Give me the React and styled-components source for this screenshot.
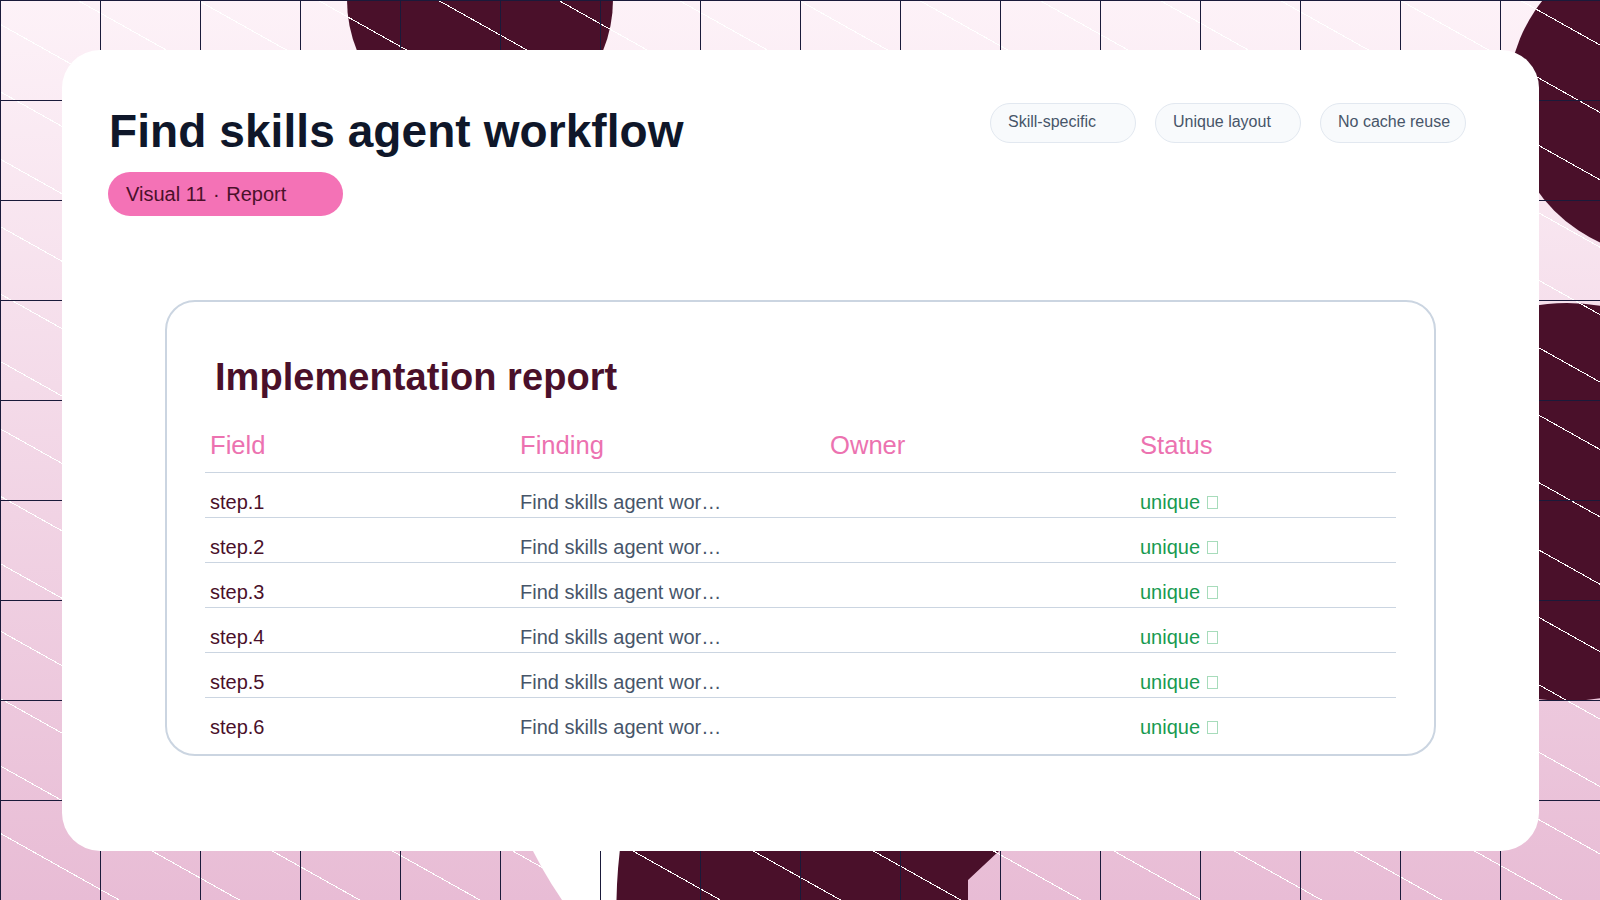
import React from 'react';
import styled, { createGlobalStyle } from 'styled-components';

const GlobalStyle = createGlobalStyle`
  html, body {
    margin: 0;
    padding: 0;
    background: #fdf2f8;
  }
  * {
    box-sizing: border-box;
  }
`;

const rows = ['step.1', 'step.2', 'step.3', 'step.4', 'step.5', 'step.6'];
const tags = ['Skill-specific', 'Unique layout', 'No cache reuse'];
const columns = ['Field', 'Finding', 'Owner', 'Status'];

const Backdrop = () => (
  <Blobs viewBox="0 0 1600 900" aria-hidden="true">
    <circle cx="480" cy="0" r="133" fill="#4a102a" />
    <circle cx="1666" cy="99" r="158" fill="#4a102a" />
    <circle cx="1567" cy="502" r="199" fill="#4a102a" />
    <path d="M525 834 Q540 868 562 900 L640 900 L640 834 Z" fill="#ffffff" />
    <path d="M622 834 Q617 868 616.5 900 L968 900 L968 880 L999 851 L1010 834 Z" fill="#4a102a" />
  </Blobs>
);

const App = () => (
  <Stage>
    <GlobalStyle />
    <Backdrop />
    <Lines />
    <Card>
      <Header>
        <TitleBlock>
          <Title>Find skills agent workflow</Title>
          <Badge>Visual 11 <Dot>·</Dot> Report</Badge>
        </TitleBlock>
        <Tags>
          {tags.map((tag) => (
            <Tag key={tag}>{tag}</Tag>
          ))}
        </Tags>
      </Header>
      <Panel>
        <PanelTitle>Implementation report</PanelTitle>
        <HeadRow>
          {columns.map((column) => (
            <HeadCell key={column}>{column}</HeadCell>
          ))}
        </HeadRow>
        {rows.map((step) => (
          <Row key={step}>
            <FieldCell>{step}</FieldCell>
            <FindingCell>Find skills agent wor…</FindingCell>
            <span />
            <StatusCell>
              unique <Tofu />
            </StatusCell>
          </Row>
        ))}
      </Panel>
    </Card>
  </Stage>
);

const Stage = styled.div`
  position: relative;
  width: 1600px;
  height: 900px;
  overflow: hidden;
  padding: 50px 61px 49px 62px;
  font-family: "Liberation Sans", Arial, sans-serif;
  background: linear-gradient(180deg, #fdf2f8 0%, #e8bcd5 100%);
`;

const Blobs = styled.svg`
  position: absolute;
  inset: 0;
  width: 1600px;
  height: 900px;
`;

const Lines = styled.div`
  position: absolute;
  inset: 0;
  background-image:
    linear-gradient(#1a1a3a 1px, transparent 1px),
    linear-gradient(90deg, #1a1a3a 1px, transparent 1px),
    repeating-linear-gradient(29.28deg, transparent 0 57.8px, #ffffff 57.8px 58.8px);
  background-size: 100px 100px, 100px 100px, auto;
`;

const Card = styled.main`
  position: relative;
  height: 801px;
  background: #ffffff;
  border-radius: 38px;
  padding: 47px 73px 0 46px;
`;

const Header = styled.header`
  display: flex;
  justify-content: space-between;
  align-items: flex-start;
  height: 203px;
`;

const TitleBlock = styled.div`
  display: flex;
  flex-direction: column;
  align-items: flex-start;
`;

const Title = styled.h1`
  margin: 3px 0 9px 1px;
  font-size: 46px;
  line-height: 63px;
  font-weight: 700;
  letter-spacing: 0.08px;
  color: #0f172a;
`;

const Badge = styled.div`
  width: 235px;
  height: 44px;
  padding: 0 18px;
  border-radius: 22px;
  background: #f472b6;
  color: #4a102a;
  font-size: 20px;
  line-height: 44px;
`;

const Dot = styled.span`
  margin: 0 1px;
`;

const Tags = styled.div`
  display: flex;
  gap: 19px;
  margin-top: 6px;
`;

const Tag = styled.div`
  width: 146px;
  height: 40px;
  padding: 0 17px;
  border: 1px solid #e2e8f0;
  border-radius: 20px;
  background: #f8fafc;
  color: #475569;
  font-size: 16px;
  line-height: 36px;
  white-space: nowrap;
`;

const Panel = styled.section`
  width: 1271px;
  height: 456px;
  margin-left: 57px;
  padding: 53px 38px 0;
  border: 2px solid #cbd5e1;
  border-radius: 30px;
`;

const PanelTitle = styled.h2`
  margin: 0 0 17px 10px;
  font-size: 38px;
  line-height: 44px;
  font-weight: 700;
  letter-spacing: 0.05px;
  color: #4a102a;
`;

const tableColumns = '310px 310px 310px 1fr';

const HeadRow = styled.div`
  display: grid;
  grid-template-columns: ${tableColumns};
  height: 57px;
  padding-left: 5px;
  padding-top: 7px;
  border-bottom: 1px solid #cbd5e1;
`;

const HeadCell = styled.div`
  font-size: 25.6px;
  line-height: 44px;
  color: #ec72b0;
`;

const Row = styled.div`
  display: grid;
  grid-template-columns: ${tableColumns};
  align-items: end;
  height: 45px;
  padding-left: 5px;
  padding-bottom: 3px;
  border-bottom: 1px solid #cbd5e1;
  font-size: 20px;
  line-height: 24px;

  &:last-child {
    border-bottom-color: transparent;
  }
`;

const FieldCell = styled.div`
  color: #4a102a;
`;

const FindingCell = styled.div`
  white-space: nowrap;
  color: #475569;
`;

const StatusCell = styled.div`
  display: flex;
  align-items: center;
  gap: 7px;
  color: #189a50;
`;

const Tofu = styled.span`
  display: inline-block;
  width: 11px;
  height: 13px;
  border: 1px solid #a7dcbb;
`;

export default App;
